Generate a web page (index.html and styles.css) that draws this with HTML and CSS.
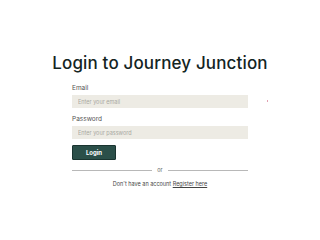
FILE: index.html
```html
<!DOCTYPE html>
<html>
<head>
<meta charset="utf-8">
<link rel="stylesheet" href="styles.css">
</head>
<body>
<main class="page">
  <h1 class="title">Login to Journey Junction</h1>
  <form class="form">
    <label class="label">Email</label>
    <div class="field-row">
      <input class="input" type="text" placeholder="Enter your email">
      <span class="dot"></span>
    </div>
    <label class="label">Password</label>
    <input class="input" type="password" placeholder="Enter your password">
    <button class="btn" type="button">Login</button>
    <div class="divider"><span class="line"></span><span class="or">or</span><span class="line"></span></div>
    <p class="register">Don't have an account <a href="#" class="link">Register here</a></p>
  </form>
</main>
</body>
</html>
```

FILE: styles.css
```css
* { box-sizing: border-box; }
html, body { margin: 0; background: #ffffff; }
body {
  font-family: "Inter", "Liberation Sans", sans-serif;
  width: 320px;
  height: 240px;
  overflow: hidden;
}
.page {
  padding-top: 51px;
  display: flex;
  flex-direction: column;
  align-items: center;
}
.title {
  margin: 0;
  font-size: 17px;
  line-height: 24px;
  font-weight: 500;
  color: #14241f;
  letter-spacing: 0.15px;
}
.form {
  width: 176px;
  margin-top: 9px;
  display: flex;
  flex-direction: column;
}
.label {
  font-size: 6.5px;
  line-height: 9px;
  color: #555555;
  margin-bottom: 2px;
}
.field-row { position: relative; }
.dot {
  position: absolute;
  left: 195px;
  top: 5px;
  width: 1px;
  height: 2px;
  background: #e0a0b0;
}
.input {
  display: block;
  width: 176px;
  height: 13px;
  border: none;
  background: #edebe4;
  padding: 0 0 0 6px;
  font-family: inherit;
  font-size: 5.5px;
  color: #333;
  margin-bottom: 7px;
  outline: none;
}
.input::placeholder { color: #a8a8a2; }
.btn {
  align-self: flex-start;
  width: 44px;
  height: 15px;
  background: #2b4f49;
  border: 1px solid #1a3430;
  border-radius: 1px;
  color: #ffffff;
  font-family: inherit;
  font-weight: 700;
  font-size: 6px;
  padding: 0;
  margin-top: -1px;
}
.divider {
  display: flex;
  align-items: center;
  margin-top: 6px;
  height: 8px;
}
.line {
  flex: 1;
  height: 1px;
  background: #b8b8b8;
}
.or {
  font-size: 5.5px;
  color: #666;
  padding: 0 5px;
  line-height: 8px;
}
.register {
  margin: 6px 0 0;
  text-align: center;
  font-size: 5.5px;
  line-height: 8px;
  color: #444;
}
.link { color: #444; text-decoration: underline; }
```
